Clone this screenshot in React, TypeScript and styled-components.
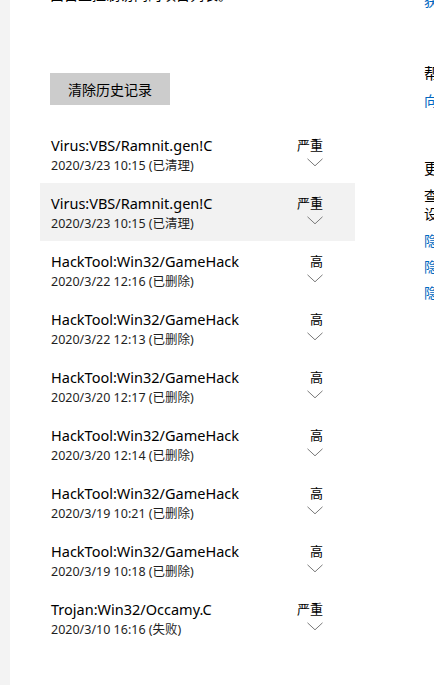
import styled, { createGlobalStyle } from 'styled-components'

const GlobalStyle = createGlobalStyle`
  html, body {
    margin: 0;
    padding: 0;
    background: #ffffff;
    overflow: hidden;
  }
  body {
    font-family: "Noto Sans", "Noto Sans CJK SC", sans-serif;
    color: #000;
  }
`

const Page = styled.div`
  display: flex;
  width: 434px;
  height: 685px;
  overflow: hidden;
`

const NavStrip = styled.div`
  width: 10px;
  flex-shrink: 0;
  background: #f3f3f3;
`

const Main = styled.div`
  flex: 1;
  display: flex;
  overflow: hidden;
`

const Content = styled.div`
  width: 414px;
  flex-shrink: 0;
  box-sizing: border-box;
  padding-left: 30px;
  margin-top: -15px;
  display: flex;
  flex-direction: column;
`

const Description = styled.p`
  margin: 0 0 0 10px;
  font-size: 14px;
  line-height: 20px;
  color: #000;
`

const ClearButton = styled.button`
  margin: 68px 0 20px 10px;
  width: 120px;
  height: 32px;
  border: none;
  background: #cccccc;
  font-family: inherit;
  font-size: 14px;
  color: #000;
  padding: 0;
`

const List = styled.div`
  width: 315px;
  display: flex;
  flex-direction: column;
`

const Row = styled.div<{ $hover?: boolean }>`
  height: 58px;
  box-sizing: border-box;
  padding: 10px 32px 0 11px;
  display: flex;
  justify-content: space-between;
  background: ${({ $hover }) => ($hover ? '#f2f2f2' : 'transparent')};
`

const Info = styled.div`
  display: flex;
  flex-direction: column;
`

const Title = styled.div`
  font-size: 14.5px;
  line-height: 20px;
  color: #000;
`

const Meta = styled.div`
  margin-top: 2px;
  font-size: 12.5px;
  line-height: 18px;
  color: #1f1f1f;
`

const Severity = styled.div`
  display: flex;
  flex-direction: column;
  align-items: flex-end;
  padding-top: 1px;
`

const Level = styled.div`
  font-size: 13px;
  line-height: 18px;
  color: #000;
`

const Chevron = styled.svg`
  margin-top: 4px;
  display: block;
`

const Side = styled.div`
  width: 160px;
  flex-shrink: 0;
  margin-top: -9px;
  display: flex;
  flex-direction: column;
  font-size: 14px;
  line-height: 20px;
`

const SideLink = styled.div<{ $gap?: number }>`
  color: #0067c0;
  margin-top: ${({ $gap }) => $gap ?? 0}px;
  white-space: nowrap;
`

const SideHeading = styled.div<{ $gap?: number }>`
  color: #000;
  font-size: 15px;
  margin-top: ${({ $gap }) => $gap ?? 0}px;
  white-space: nowrap;
`

const SideText = styled.div`
  color: #000;
  margin-top: 9px;
  font-size: 14px;
  line-height: 18px;
`

type Threat = { name: string; time: string; status: string; level: string }

const threats: Threat[] = [
  { name: 'Virus:VBS/Ramnit.gen!C', time: '2020/3/23 10:15', status: '已清理', level: '严重' },
  { name: 'Virus:VBS/Ramnit.gen!C', time: '2020/3/23 10:15', status: '已清理', level: '严重' },
  { name: 'HackTool:Win32/GameHack', time: '2020/3/22 12:16', status: '已删除', level: '高' },
  { name: 'HackTool:Win32/GameHack', time: '2020/3/22 12:13', status: '已删除', level: '高' },
  { name: 'HackTool:Win32/GameHack', time: '2020/3/20 12:17', status: '已删除', level: '高' },
  { name: 'HackTool:Win32/GameHack', time: '2020/3/20 12:14', status: '已删除', level: '高' },
  { name: 'HackTool:Win32/GameHack', time: '2020/3/19 10:21', status: '已删除', level: '高' },
  { name: 'HackTool:Win32/GameHack', time: '2020/3/19 10:18', status: '已删除', level: '高' },
  { name: 'Trojan:Win32/Occamy.C', time: '2020/3/10 16:16', status: '失败', level: '严重' }
]

const App = () => {
  return (
    <Page>
      <GlobalStyle />
      <NavStrip />
      <Main>
        <Content>
          <Description>由自主控制访问的项目列表。</Description>
          <ClearButton>清除历史记录</ClearButton>
          <List>
            {threats.map((t, i) => (
              <Row key={i} $hover={i === 1}>
                <Info>
                  <Title>{t.name}</Title>
                  <Meta>
                    {t.time} ({t.status})
                  </Meta>
                </Info>
                <Severity>
                  <Level>{t.level}</Level>
                  <Chevron width="16" height="9" viewBox="0 0 16 9">
                    <path d="M0.5 0.8 L8 7.8 L15.5 0.8" fill="none" stroke="#7a7a7a" strokeWidth="1" />
                  </Chevron>
                </Severity>
              </Row>
            ))}
          </List>
        </Content>
        <Side>
          <SideLink>获取帮助</SideLink>
          <SideHeading $gap={52}>帮助改进 Windows 安全中心</SideHeading>
          <SideLink $gap={8}>向我们提供反馈</SideLink>
          <SideHeading $gap={47}>更改你的隐私设置</SideHeading>
          <SideText>
            查看和更改 Windows
            <br />
            设备的隐私设置。
          </SideText>
          <SideLink $gap={8}>隐私设置</SideLink>
          <SideLink $gap={6}>隐私仪表板</SideLink>
          <SideLink $gap={6}>隐私声明</SideLink>
        </Side>
      </Main>
    </Page>
  )
}

export default App
